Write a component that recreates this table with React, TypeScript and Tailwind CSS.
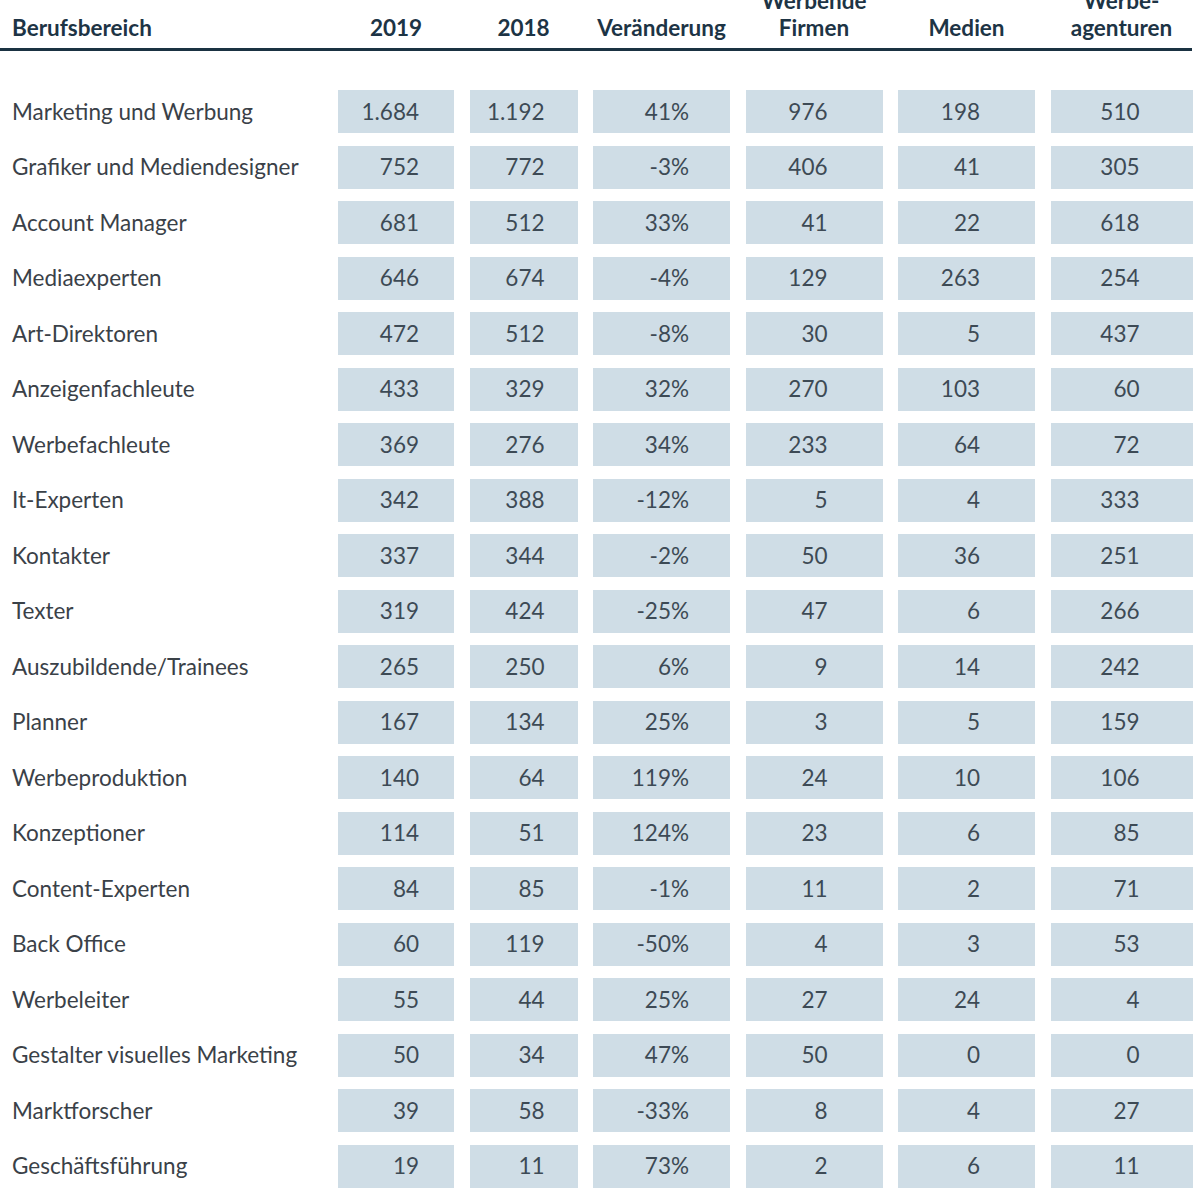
import React from 'react';

const rows: [string, string, string, string, string, string, string][] = [
  ['Marketing und Werbung', '1.684', '1.192', '41%', '976', '198', '510'],
  ['Grafiker und Mediendesigner', '752', '772', '-3%', '406', '41', '305'],
  ['Account Manager', '681', '512', '33%', '41', '22', '618'],
  ['Mediaexperten', '646', '674', '-4%', '129', '263', '254'],
  ['Art-Direktoren', '472', '512', '-8%', '30', '5', '437'],
  ['Anzeigenfachleute', '433', '329', '32%', '270', '103', '60'],
  ['Werbefachleute', '369', '276', '34%', '233', '64', '72'],
  ['It-Experten', '342', '388', '-12%', '5', '4', '333'],
  ['Kontakter', '337', '344', '-2%', '50', '36', '251'],
  ['Texter', '319', '424', '-25%', '47', '6', '266'],
  ['Auszubildende/Trainees', '265', '250', '6%', '9', '14', '242'],
  ['Planner', '167', '134', '25%', '3', '5', '159'],
  ['Werbeproduktion', '140', '64', '119%', '24', '10', '106'],
  ['Konzeptioner', '114', '51', '124%', '23', '6', '85'],
  ['Content-Experten', '84', '85', '-1%', '11', '2', '71'],
  ['Back Office', '60', '119', '-50%', '4', '3', '53'],
  ['Werbeleiter', '55', '44', '25%', '27', '24', '4'],
  ['Gestalter visuelles Marketing', '50', '34', '47%', '50', '0', '0'],
  ['Marktforscher', '39', '58', '-33%', '8', '4', '27'],
  ['Geschäftsführung', '19', '11', '73%', '2', '6', '11'],
];

// right padding per value column, so the figures line up like in the sheet
const pad = ['pr-[35px]', 'pr-[33px]', 'pr-[41px]', 'pr-[55px]', 'pr-[55px]', 'pr-[53px]'];

const cols = 'grid grid-cols-[322.5px_116px_108px_137px_137px_137px_142px] gap-x-[15.5px]';

const HeadCell = ({ children, left }: { children: React.ReactNode; left?: boolean }) => (
  <div className={`h-[41px] flex flex-col justify-end ${left ? 'pl-3 items-start' : 'items-center text-center'}`}>
    <div>{children}</div>
  </div>
);

export default function App() {
  return (
    <div className="w-[1200px] h-[1200px] bg-white overflow-hidden" style={{ fontFamily: 'Lato, "Open Sans", sans-serif' }}>
      {/* header, two-line titles run off the top edge */}
      <div className={`${cols} text-[22.5px] font-bold leading-[27px] text-[#1d3445]`}>
        <HeadCell left>Berufsbereich</HeadCell>
        <HeadCell>2019</HeadCell>
        <HeadCell>2018</HeadCell>
        <HeadCell>Veränderung</HeadCell>
        <HeadCell>Werbende<br />Firmen</HeadCell>
        <HeadCell>Medien</HeadCell>
        <HeadCell>Werbe-<br />agenturen</HeadCell>
      </div>
      <div className="mt-[7px] w-[1192px] h-[3px] bg-[#1a3242]" />

      {/* body */}
      <div className={`${cols} gap-y-[12.5px] mt-[39px]`}>
        {rows.map((r, i) => (
          <React.Fragment key={i}>
            <div className="pl-3 h-[43px] flex items-center text-[22.5px] text-[#3a4148]">{r[0]}</div>
            {r.slice(1).map((v, j) => (
              <div key={j} className={`h-[43px] bg-[#cfdde6] flex items-center justify-end ${pad[j]} text-[22.5px] text-[#3d4a55]`}>
                {v}
              </div>
            ))}
          </React.Fragment>
        ))}
      </div>
    </div>
  );
}
